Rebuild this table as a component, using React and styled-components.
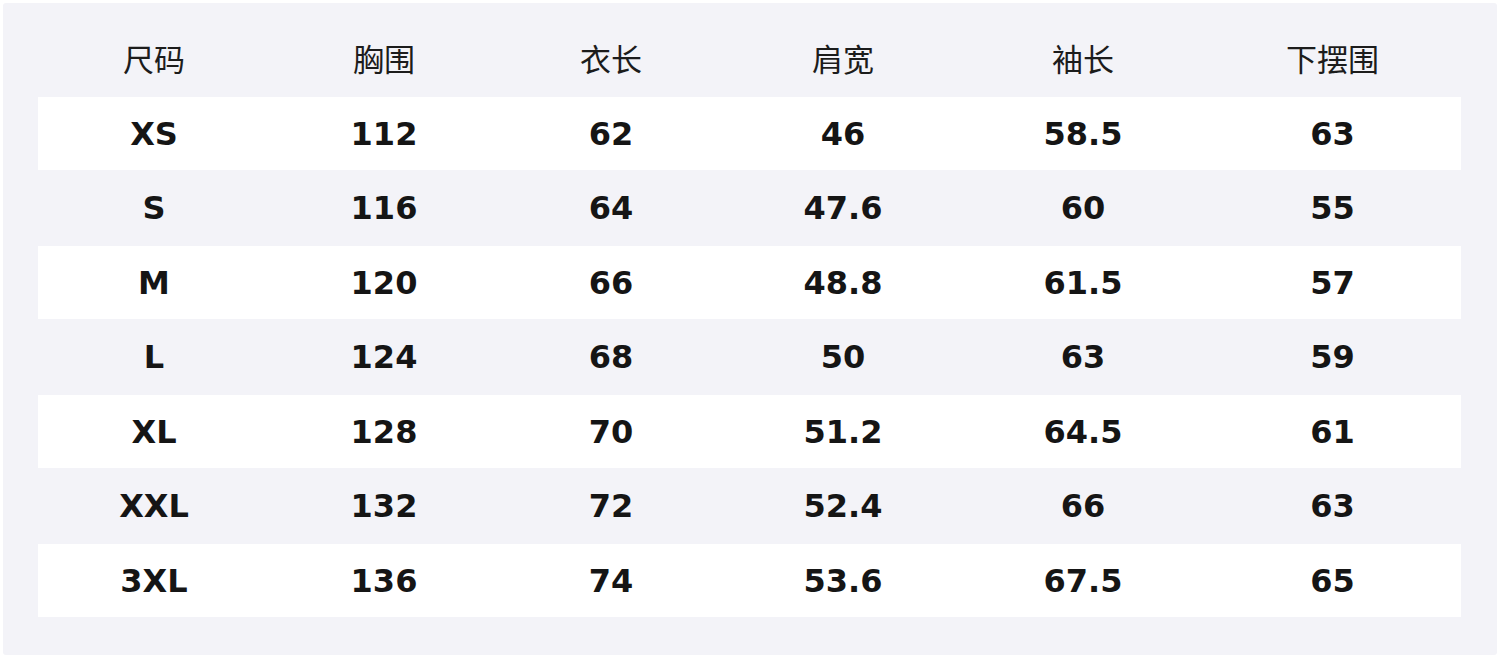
import styled, { createGlobalStyle } from 'styled-components'

const GlobalStyle = createGlobalStyle`
  html, body {
    margin: 0;
    padding: 0;
    background: #ffffff;
  }
  body {
    font-family: 'DejaVu Sans', 'Noto Sans CJK SC', sans-serif;
  }
`

const Panel = styled.div`
  margin: 3px;
  height: 652px;
  box-sizing: border-box;
  background: #f3f3f8;
  border-radius: 3px;
  padding: 0 38px 0 35px;
`

const Table = styled.div`
  display: grid;
  grid-template-columns: 232px 228px 226px 238px 242px 257px;
`

const HeadCell = styled.div`
  height: 94px;
  display: flex;
  align-items: center;
  justify-content: center;
  padding-top: 15px;
  box-sizing: border-box;
  font-family: 'Noto Sans CJK SC', sans-serif;
  font-size: 31px;
  color: #1c1c1c;
`

const Cell = styled.div`
  height: ${p => (p.$index % 2 === 0 ? 73 : 76)}px;
  display: flex;
  align-items: center;
  justify-content: center;
  background: ${p => (p.$index % 2 === 0 ? '#ffffff' : 'transparent')};
  font-family: 'DejaVu Sans', sans-serif;
  font-weight: bold;
  font-size: 32px;
  color: #151515;
`

const headers = ['尺码', '胸围', '衣长', '肩宽', '袖长', '下摆围']

const rows = [
  ['XS', '112', '62', '46', '58.5', '63'],
  ['S', '116', '64', '47.6', '60', '55'],
  ['M', '120', '66', '48.8', '61.5', '57'],
  ['L', '124', '68', '50', '63', '59'],
  ['XL', '128', '70', '51.2', '64.5', '61'],
  ['XXL', '132', '72', '52.4', '66', '63'],
  ['3XL', '136', '74', '53.6', '67.5', '65'],
]

const App = () => {
  return (
    <>
      <GlobalStyle />
      <Panel>
        <Table>
          {headers.map((h) => (
            <HeadCell key={h}>{h}</HeadCell>
          ))}
          {rows.map((row, i) =>
            row.map((v, j) => (
              <Cell key={`${i}-${j}`} $index={i}>{v}</Cell>
            ))
          )}
        </Table>
      </Panel>
    </>
  )
}

export default App
